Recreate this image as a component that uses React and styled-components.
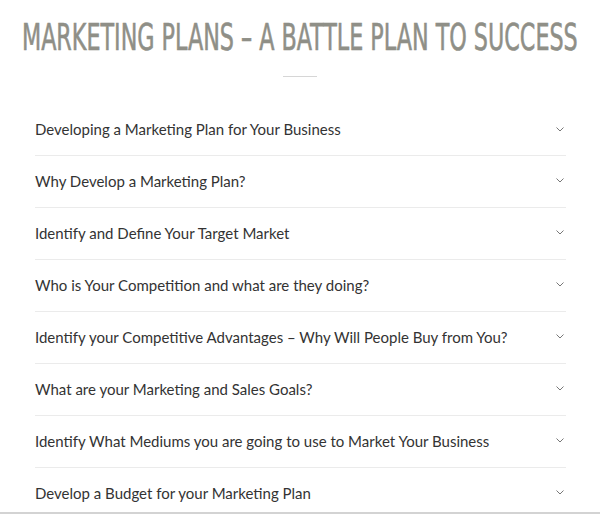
import React, { useLayoutEffect, useRef, useState } from 'react';
import styled, { createGlobalStyle } from 'styled-components';

const GlobalStyle = createGlobalStyle`
  html, body {
    margin: 0;
    padding: 0;
    background: #fff;
  }
  body {
    font-family: Lato, "Open Sans", sans-serif;
  }
`;

const Page = styled.div`
  width: 600px;
  height: 514px;
  overflow: hidden;
  box-sizing: border-box;
  border-bottom: 2px solid #d3d3d3;
`;

const Header = styled.header`
  display: flex;
  flex-direction: column;
  align-items: center;
  padding-top: 14px;
`;

const Title = styled.h1`
  margin: 0;
  font-family: "DejaVu Sans", sans-serif;
  font-stretch: condensed;
  font-weight: 400;
  font-size: 38px;
  line-height: 46px;
  color: #8f8f87;
  white-space: nowrap;
  transform-origin: center;
  -webkit-text-stroke: 0.6px #8f8f87;
`;

const Divider = styled.div`
  width: 34px;
  height: 1px;
  background: #d6d6d6;
  margin-top: 16px;
`;

const List = styled.ul`
  list-style: none;
  margin: 27px 34px 0 35px;
  padding: 0;
`;

const Row = styled.li`
  display: flex;
  align-items: center;
  justify-content: space-between;
  height: 51px;
  padding-bottom: 1px;
  box-sizing: content-box;
  margin-top: -1px;
  border-bottom: 1px solid #ebebeb;

  &:first-child {
    margin-top: 0;
    height: 50px;
  }
`;

const Label = styled.span`
  font-size: 15px;
  color: #333;
`;

const Chevron = styled.svg`
  width: 8px;
  height: 5px;
  margin-right: 2px;
  flex-shrink: 0;
`;

const items = [
  'Developing a Marketing Plan for Your Business',
  'Why Develop a Marketing Plan?',
  'Identify and Define Your Target Market',
  'Who is Your Competition and what are they doing?',
  'Identify your Competitive Advantages \u2013 Why Will People Buy from You?',
  'What are your Marketing and Sales Goals?',
  'Identify What Mediums you are going to use to Market Your Business',
  'Develop a Budget for your Marketing Plan',
];

// the title font is a condensed display face; squeeze the fallback to the same width
function FitTitle({ children, width }) {
  const ref = useRef(null);
  const [scale, setScale] = useState(1);
  useLayoutEffect(() => {
    if (ref.current) setScale(width / ref.current.scrollWidth);
  }, [width]);
  return (
    <Title ref={ref} style={{ transform: `scaleX(${scale})` }}>
      {children}
    </Title>
  );
}

export default function App() {
  return (
    <>
      <GlobalStyle />
      <Page>
        <Header>
          <FitTitle width={556}>MARKETING PLANS – A BATTLE PLAN TO SUCCESS</FitTitle>
          <Divider />
        </Header>
        <List>
          {items.map((text) => (
            <Row key={text}>
              <Label>{text}</Label>
              <Chevron viewBox="0 0 8 5">
                <path d="M0.5 0.5 L4 4 L7.5 0.5" fill="none" stroke="#777" strokeWidth="1" />
              </Chevron>
            </Row>
          ))}
        </List>
      </Page>
    </>
  );
}
